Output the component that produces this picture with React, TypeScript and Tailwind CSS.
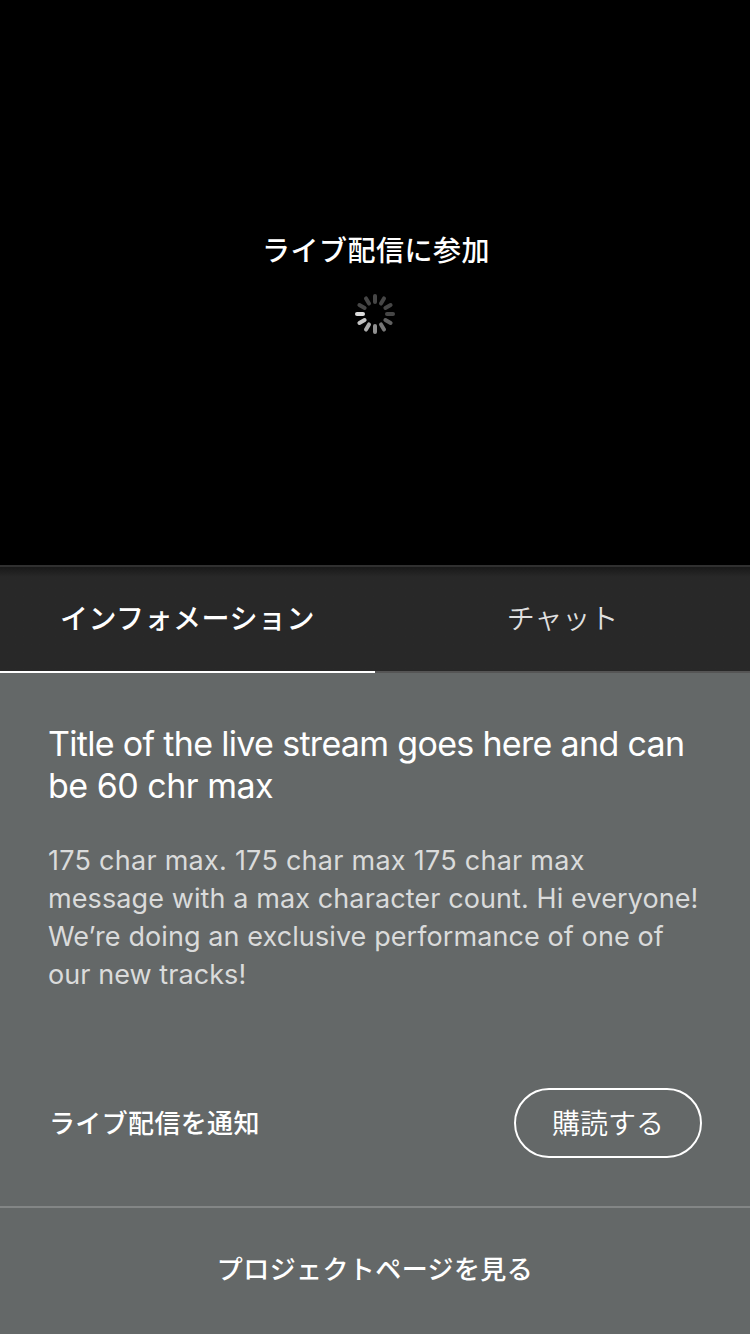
const spokes = [
  "#464646", "#464646", "#464646", "#464646", "#606060", "#777", "#909090", "#aaa", "#c3c3c3", "#dcdcdc", "#464646", "#464646",
];

const description = [
  { text: "175 char max. 175 char max 175 char max", spacing: "tracking-[0.26px]" },
  { text: "message with a max character count. Hi everyone!", spacing: "tracking-[0.1px]" },
  { text: "We’re doing an exclusive performance of one of", spacing: "tracking-[0.09px]" },
  { text: "our new tracks!", spacing: "tracking-[0.07px]" },
];

export default function App() {
  return (
    <main className="flex h-[1334px] w-[750px] flex-col overflow-hidden bg-[#646868] font-['Inter','Noto_Sans_CJK_JP',sans-serif] text-white">
      <section className="flex h-[565px] flex-col items-center bg-black pt-[231px]">
        <p className="h-10 pl-0.5 text-[28px] leading-10 font-medium tracking-[0.5px] whitespace-nowrap">ライブ配信に参加</p>
        <svg className="mt-[23px] size-10" viewBox="0 0 40 40" strokeWidth="4" strokeLinecap="round">
          {spokes.map((color, i) => (
            <path key={i} d="M20 2v6" stroke={color} transform={`rotate(${i * 30} 20 20)`} />
          ))}
        </svg>
      </section>
      <nav className="grid h-[108px] grid-cols-2 border-t-2 border-[#303030] bg-[#282828] bg-linear-to-b from-[#191919] to-[#282828] to-[10px] text-center text-[28px] leading-[104px]">
        <button className="border-b-2 border-white font-medium tracking-[0.5px]">インフォメーション</button>
        <button className="border-b-2 border-[#555] font-[350] text-[#dfdfdf]">チャット</button>
      </nav>
      <section className="flex h-[533px] flex-col px-12 pt-[50px]">
        <h1 className="text-[34px] leading-[42px] tracking-[-0.68px] whitespace-nowrap">
          Title of the live stream goes here and can<br />
          <span className="tracking-[-0.5px]">be 60 chr max</span>
        </h1>
        <p className="mt-[35px] text-[27px] leading-[38px] whitespace-nowrap text-[#dadbdb]">
          {description.map(({ text, spacing }) => (
            <span key={text} className={`block ${spacing}`}>{text}</span>
          ))}
        </p>
        <div className="mt-[94px] flex items-center justify-between">
          <p className="pl-px text-[26px] font-medium tracking-[0.35px]">ライブ配信を通知</p>
          <button className="h-[70px] w-[188px] rounded-full border-2 border-white pt-px text-[28px] font-[350]">購読する</button>
        </div>
      </section>
      <footer className="flex h-32 items-center justify-center border-t-2 border-[#838686] pb-[3px] text-[26px] font-medium tracking-[0.4px]">プロジェクトページを見る</footer>
    </main>
  );
}
